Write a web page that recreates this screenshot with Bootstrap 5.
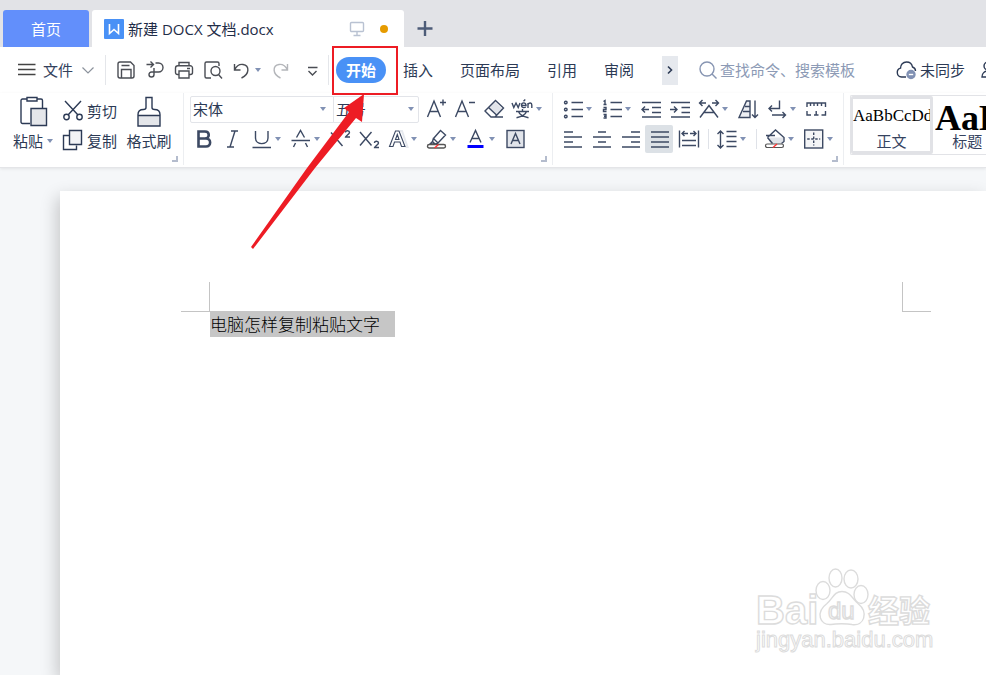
<!DOCTYPE html>
<html lang="zh-CN">
<head>
<meta charset="utf-8">
<meta name="viewport" content="width=device-width, initial-scale=1">
<title>新建 DOCX 文档.docx</title>
<link href="https://cdn.jsdelivr.net/npm/bootstrap@5.3.0/dist/css/bootstrap.min.css" rel="stylesheet">
<style>
body{font-family:"Noto Sans","Noto Sans CJK SC",sans-serif;font-size:15px;line-height:20px;color:#2c3a55;background:#f5f7f9}
.bare,.tool{border:0;padding:0;background:none;color:inherit;font-size:15px;line-height:20px;white-space:nowrap;flex:none;border-radius:0}
.tab-strip{background:#e2e3e7;height:47px;padding-left:3px;gap:3px}
.home-tab{width:86px;height:37px;background:#628ffb;color:#fff;border-radius:3px 3px 0 0}
.doc-tab{width:312px;height:37px;background:#fff;border-radius:3px 3px 0 0;padding:0 16px 0 12px;color:#1f2d48;font-family:"Open Sans","Noto Sans CJK SC",sans-serif}
.doc-tab .dot{width:8px;height:8px;background:#e69b00;margin-left:13px}
.menu-row{height:46px;background:#fff}
.file-menu{margin-left:19px;color:#33415c}
.vline{width:1px;background:#e4e6ea;flex:none}
.ic{width:20px;height:20px;fill:none;stroke:currentColor;stroke-width:1.4;flex:none;overflow:visible;display:block}
.tool{width:29px;height:30px;display:flex;align-items:center;color:#3c4963}
.tool.drop{width:39px;gap:3px}
.caret{width:6px;height:4px;flex:none;background:#8191b4;clip-path:polygon(0 0,100% 0,50% 100%)}
.quick{padding-left:5px;color:#4a4d54}
.quick .tool{color:#4a4d54;padding-left:5px}
.pill{background:#4991f6;color:#fff;width:50px;height:26px;border-radius:13px;font-weight:700;margin-left:7px}
.menu-tabs{gap:27px;padding-left:17px}
.more-box{width:16px;height:29px;background:#e6e9ee;margin-left:28px}
.search-label{gap:2px}
.search-box{width:136px;color:#8c9ab5;outline:0}
.search-box::placeholder{color:#8c9ab5;opacity:1}
.ribbon{background:#fff;height:75px;border-bottom:1px solid #e4e5e8;box-shadow:0 1px 3px rgba(0,0,0,.08);position:relative}
.group{border-right:1px solid #eceef1;margin-bottom:2px;position:relative;flex:none}
.launch{position:absolute;right:5px;bottom:3px;width:6px;height:6px;border:solid #b4bccd;border-width:0 2px 2px 0}
.clip-group{width:184px;padding:3px 0 0 13px}
.big{width:50px;gap:4px}
.brush{width:56px}
.big svg{width:28px;height:31px}
.font-group{width:369px;padding:1px 0 0 6px}
.combo{height:27px;border:1px solid #e2e4e9;padding:0 7px 0 2px;flex:none}
.combo select{appearance:none;border:0;background:none;color:#2c3a55;padding:0;outline:0;min-width:0;flex:1}
.name-combo{width:144px;border-radius:2px 0 0 2px}
.size-combo{width:86px;margin-left:-1px;margin-right:7px;border-radius:0 2px 2px 0;padding-right:4px}
.para-group{width:291px;padding:1px 0 0 10px}
.split{width:9px;height:20px;border-left:1px solid #dfe2e8;margin-top:5px}
.chosen{position:relative}
.chosen::before{content:"";position:absolute;inset:1px 6px 1px -5px;background:#dce1e6;border-radius:2px}
.chosen .ic{position:relative}
.gallery{margin:2px 0 12px 6px;border:1px solid #e2e3e7;border-right:0;border-radius:2px 0 0 2px;overflow:hidden}
.style-card{width:82px;overflow:hidden;flex:none;border:3px solid transparent;border-left-width:2px;padding:0;background:none;color:#36435f}
.style-card.current{border-color:#e1e2e6;border-radius:2px}
.style-card span{display:block}
.sample{font-family:"Liberation Serif",serif;font-size:17px;line-height:32px;height:31px;color:#000;text-align:left;white-space:nowrap}
.sample.title{font-size:36px;font-weight:700;line-height:36px}
.sheet{background:#fff;margin:23px 0 0 60px;box-shadow:-3px 6px 16px rgba(0,0,0,.2);padding:91px 55px 0 121px;position:relative}
.corner{width:29px;height:30px;border:0 solid #c4c4c4;border-bottom-width:1px}
.corner.start{border-right-width:1px}
.corner.end{border-left-width:1px}
.selected-text{display:inline-block;min-width:185px;background:#c6c6c6;color:#000;font-family:"Noto Sans CJK SC",sans-serif;font-weight:300;font-size:17px;line-height:26px;margin-left:29px;margin-top:-1px;vertical-align:top}
.watermark{position:absolute;right:50px;bottom:16px;width:184px;height:92px}
.callout{position:absolute;left:240px;top:40px;width:170px;height:215px;pointer-events:none}
</style>
<script src="https://cdn.jsdelivr.net/npm/bootstrap@5.3.0/dist/js/bootstrap.bundle.min.js"></script>
</head>
<body class="vh-100 d-flex flex-column overflow-hidden position-relative">

<header class="tab-strip d-flex align-items-end flex-shrink-0">
  <button class="bare home-tab">首页</button>
  <div class="doc-tab d-flex align-items-center flex-shrink-0">
    <svg class="ic me-1" viewBox="0 0 20 20"><rect width="20" height="20" rx="1" fill="#4991f6" stroke="none"/><path d="M5.500 5v9.500l4.500-4 4.500 4V5" stroke="#fff" stroke-width="1.600"/></svg>
    <span class="me-auto text-nowrap">新建 DOCX 文档.docx</span>
    <svg class="ic" viewBox="0 0 20 20" style="color:#b9c2d2"><rect x="3.500" y="3.500" width="13" height="9" rx="1"/><path d="M10 13v3.500M6.500 16.500h7"/></svg>
    <span class="dot rounded-circle flex-shrink-0"></span>
  </div>
  <button class="bare ms-2 mb-2" aria-label="新建标签"><svg class="ic" viewBox="0 0 20 20" style="color:#4d5c78"><path d="M10 2v15M2.500 9.500h15" stroke-width="2.400"/></svg></button>
</header>

<nav class="menu-row d-flex align-items-center flex-shrink-0 overflow-hidden">
  <button class="bare file-menu d-flex align-items-center">
    <svg class="ic me-1" viewBox="0 0 20 20"><path d="M-1 4.500h17.500M-1 9.500h17.500M-1 14.500h17.500" stroke="#444"/></svg>文件
    <svg class="ic ms-1" viewBox="0 0 20 20" style="color:#8c929c"><path d="M5.500 7.500l5.500 5.500 5.500-5.500" stroke-width="1.200"/></svg>
  </button>
  <span class="vline ms-2" style="height:30px"></span>
  <div class="quick d-flex">
    <button class="tool" aria-label="保存"><svg class="ic" viewBox="0 0 20 20"><path d="M2 4a2 2 0 0 1 2-2h10.500L18 5.500V16a2 2 0 0 1-2 2H4a2 2 0 0 1-2-2zM5.500 18V9.500h9.500V18M5.500 5.500h8"/></svg></button>
    <button class="tool" aria-label="导出"><svg class="ic" viewBox="0 0 20 20"><path d="M1.500 4.500h6.500M5.500 1.500l3 3-3 3M10.500 3H13.500a4.500 4.500 0 0 1 0 9H6.500a2.500 2.500 0 1 0 2.500 2.500V8"/></svg></button>
    <button class="tool" aria-label="打印"><svg class="ic" viewBox="0 0 20 20"><path d="M5 5.500V2.500h10v3M5 14.500H3.500a2 2 0 0 1-2-2V8a2.300 2.300 0 0 1 2.300-2.300h12.400A2.300 2.300 0 0 1 18.500 8v4.500a2 2 0 0 1-2 2H15M5 11h10v7H5zM13 8.500h3"/></svg></button>
    <button class="tool" aria-label="打印预览"><svg class="ic" viewBox="0 0 20 20"><path d="M8 18H3.500A1.500 1.500 0 0 1 2 16.500v-13A1.500 1.500 0 0 1 3.500 2h11A1.500 1.500 0 0 1 16 3.500V6M15.500 14.500L19 18.500"/><circle cx="12.500" cy="11" r="4.500"/></svg></button>
    <button class="tool drop" aria-label="撤销"><svg class="ic" viewBox="0 0 20 20"><path d="M2.500 4v6h6M2.500 10c2-4 5-6 8.500-5.500 6.500 1 7 9.500-1.500 13.500"/></svg><span class="caret"></span></button>
    <button class="tool" aria-label="恢复" style="color:#b4b6ba"><svg class="ic" viewBox="0 0 20 20"><path d="M16.500 4v6h-6M16.500 10c-2-4-5-6-8.500-5.500-6.500 1-7 9.500 1.500 13.500" stroke="#b4b6ba"/></svg></button>
    <button class="tool ms-1" aria-label="自定义快速访问工具栏"><svg class="ic" viewBox="0 0 20 20"><path d="M4 7.500h9.500M4.500 11l4 4 4-4"/></svg></button>
  </div>
  <span class="vline" style="height:30px"></span>
  <button class="bare pill">开始</button>
  <div class="menu-tabs d-flex">
    <button class="bare">插入</button><button class="bare">页面布局</button><button class="bare">引用</button><button class="bare">审阅</button>
  </div>
  <button class="bare more-box d-flex align-items-center me-3" aria-label="更多选项卡"><svg class="ic" viewBox="0 0 20 20"><path d="M6 6.500l3.500 3.500L6 13.500" stroke-width="1.600"/></svg></button>
  <label class="search-label d-flex align-items-center flex-shrink-0 ps-1"><svg class="ic" viewBox="0 0 20 20" style="color:#8795b2"><circle cx="9" cy="9" r="7"/><path d="M14 14l4.500 4.500"/></svg><input class="bare search-box" type="text" aria-label="搜索" placeholder="查找命令、搜索模板"></label>
  <button class="bare d-flex align-items-center ms-4 ps-3"><svg class="ic me-1" viewBox="0 0 20 20"><path d="M10 17H5.500a4.500 4.500 0 0 1-1-8.800C4.500 4.500 7 2 10.500 2c3.200 0 5.500 2 6 5 1.700.500 3 2 3 4"/><circle cx="15" cy="14.500" r="4" fill="#8191b4" stroke="#8191b4"/><path d="M12.800 14.500h4.400" stroke="#fff"/></svg>未同步</button>
  <button class="bare ms-3" aria-label="协作"><svg class="ic" viewBox="0 0 20 20"><circle cx="7" cy="6" r="4"/><path d="M1 17c0-8 12-8 12 0zM14 3a4 4 0 0 1 0 7M16 11c2 1 3 3 3 6h-3"/></svg></button>
</nav>

<section class="ribbon d-flex flex-shrink-0">
 <div class="d-flex w-100 overflow-hidden">
  <div class="group clip-group d-flex align-items-start">
    <button class="bare big d-flex flex-column align-items-start">
      <svg class="ms-2 ic" viewBox="0 0 28 31"><path d="M9 27.500H1.500A1.500 1.500 0 0 1 0 26V4.500A1.500 1.500 0 0 1 1.500 3H6V1.500h10v3.500H6V3M16 3h4a1.500 1.500 0 0 1 1.500 1.500v8"/><path d="M10 12.500h15.500v17H10z" fill="#e4e6ea"/></svg>
      <span class="d-flex align-items-center gap-1">粘贴<i class="caret"></i></span>
    </button>
    <div class="d-flex flex-column">
      <button class="bare d-flex align-items-center gap-1" style="height:30px"><svg class="ic" viewBox="0 0 20 20"><path d="M2 0L15 14M18 0L5 14"/><circle cx="3.500" cy="16" r="2.700"/><circle cx="16.500" cy="16" r="2.700"/></svg>剪切</button>
      <button class="bare d-flex align-items-center gap-1" style="height:30px"><svg class="ic" viewBox="0 0 20 20"><path d="M6.500 4.500h-6v14h13v-4"/><path d="M6.500-.500h12v14h-12z" fill="#f2f3f6"/></svg>复制</button>
    </div>
    <button class="bare big brush d-flex flex-column align-items-center ms-1">
      <svg class="ic" viewBox="0 0 28 31"><path d="M3 19h22v11H3z" fill="#e4e6ea" stroke="none"/><path d="M11 1.500h6v10c0 1.500 1 2 2.500 2 3.500 0 5.500 1.500 5.500 5v11.500H3V18.500c0-3.500 2-5 5.500-5 1.500 0 2.500-.500 2.500-2zM3 19.500h22"/></svg>
      <span>格式刷</span>
    </button>
    <i class="launch"></i>
  </div>

  <div class="group font-group">
    <div class="d-flex align-items-center" style="height:30px">
      <div class="combo name-combo d-flex align-items-center"><select aria-label="字体"><option>宋体</option></select><i class="caret"></i></div>
      <div class="combo size-combo d-flex align-items-center"><select aria-label="字号"><option>五号</option></select><i class="caret"></i></div>
      <button class="tool" aria-label="增大字号"><svg class="ic" viewBox="0 0 20 20"><path d="M1.500 18L8 2l6.500 16M4 12.500h8M14 3.500h6M17 .500v6"/></svg></button>
      <button class="tool" aria-label="减小字号"><svg class="ic" viewBox="0 0 20 20"><path d="M.500 18L7 2l6.500 16M3 12.500h8M14 3.500h6"/></svg></button>
      <button class="tool" aria-label="清除格式"><svg class="ic" viewBox="0 0 20 20"><path d="M10.500 2.500l8 7.500-5.500 6.500-8.500-7.500z" fill="#e1e4ea" stroke="none"/><path d="M11.500 1.500l8 7.500-8.500 9H7l-6-6zM4.500 8.500l8 7.500M7 18h12"/></svg></button>
      <button class="tool drop" aria-label="拼音指南"><svg class="ic" viewBox="0 0 20 20"><path d="M-1 4l1.800 4.500L3 4l2.200 4.500L7 4M8.500 6.500H13C13 3 8.500 3 8.500 6.500c0 2.500 3 2.500 4.300 1.500M10.500 2.200L12.300.500M15 9V4m0 1.500c1-2 3.800-2 3.800.500v3M3 12.500h13M9.500 10v2.500M5.500 12.500c1 3 4 5 10 6.200M13.500 12.500c-1 3-4 5-10 6.200"/></svg><i class="caret"></i></button>
    </div>
    <div class="d-flex ps-1">
      <button class="tool" aria-label="加粗"><svg class="ic" viewBox="0 0 20 20"><path d="M4.500 2.500h6.500c5 0 5 7 0 7H4.500h7.500c5.500 0 5.500 8 0 8H4.500z" stroke-width="2.600"/></svg></button>
      <button class="tool" aria-label="倾斜"><svg class="ic" viewBox="0 0 20 20"><path d="M8 2h7M4 18h7M12 2L7 18"/></svg></button>
      <button class="tool drop" aria-label="下划线"><svg class="ic" viewBox="0 0 20 20"><path d="M3.500 2v7c0 7.500 12.500 7.500 12.500 0V2M.500 18.500h18.500"/></svg><i class="caret"></i></button>
      <button class="tool drop" aria-label="删除线"><svg class="ic" viewBox="0 0 20 20"><path d="M.500 11.500h18.500M5.500 8.500L9.500 1.500l4 7M2.500 18l2-4M16.500 18l-2-4"/></svg><i class="caret"></i></button>
      <button class="tool" aria-label="上标"><svg class="ic" viewBox="0 0 20 20"><path d="M1 3.500L12.500 17M12.500 3.500L1 17M15.500 3.500c0-2.500 4-2 4 0 0 1.500-4 3.500-4 4.500H20"/></svg></button>
      <button class="tool" aria-label="下标"><svg class="ic" viewBox="0 0 20 20"><path d="M1 3L12.500 16.500M12.500 3L1 16.500M15.500 14c0-2.500 4-2 4 0 0 1.500-4 3.500-4 4.500H20"/></svg></button>
      <button class="tool drop" aria-label="文字效果"><svg class="ic" viewBox="0 0 20 20"><path d="M12 2h2l5.500 16h-2" stroke="#e6e9ee" stroke-width="2"/><path d="M1.500 17.500L7.500 2H11l6 15.500h-3.500L12 13H6.500L5 17.500zM7.500 10.500h3.500L9.300 5.500z" stroke-width="1.100"/></svg><i class="caret"></i></button>
      <button class="tool drop" aria-label="突出显示"><svg class="ic" viewBox="0 0 20 20"><path d="M13.500 1.500l5 4.500-7.500 8-4.500-4.500zM6.500 9l-1 3.500 2.500 2.500 3-.500M5.500 12.500L3 15h4.500"/><rect x=".500" y="15.500" width="18" height="3.500" rx="1.700" fill="#fff" stroke="#555"/><path d="M7.500 19l4-3.500" stroke="#f33"/></svg><i class="caret"></i></button>
      <button class="tool drop" aria-label="字体颜色"><svg class="ic" viewBox="0 0 20 20"><path d="M4 13.500L9.500 1.500 15 13.500M6 9.500h7"/><path d="M1.500 17.500h16" stroke="#00f" stroke-width="3"/></svg><i class="caret"></i></button>
      <button class="tool" aria-label="字符底纹"><svg class="ic" viewBox="0 0 20 20"><rect x="2" y="1.500" width="17" height="17" fill="#e1e4ea"/><path d="M6 15L10.500 4.500 15 15M7.500 11.500h6"/></svg></button>
    </div>
    <i class="launch"></i>
  </div>

  <div class="group para-group">
    <div class="d-flex">
      <button class="tool drop" aria-label="项目符号"><svg class="ic" viewBox="0 0 20 20"><path d="M8.500 3.500H20M8.500 10.500H20M8.500 17.500H20"/><circle cx="2.800" cy="3.500" r="1.300"/><circle cx="2.800" cy="10.500" r="1.300"/><circle cx="2.800" cy="17.500" r="1.300"/></svg><i class="caret"></i></button>
      <button class="tool drop" aria-label="编号"><svg class="ic" viewBox="0 0 20 20"><path d="M8.500 3.500H20M8.500 10.500H20M8.500 17.500H20M1.500 2.500L3 1.500v4M1.500 5.500h3M1.500 8.500h2.500v2h-2.500v2h3M1.500 15.500h2.500v3.500h-2.500M2 17.300h2"/></svg><i class="caret"></i></button>
      <button class="tool" aria-label="减少缩进"><svg class="ic" viewBox="0 0 20 20"><path d="M1 3.500h19M11 8.500h9M11 13.500h9M1 18h19M1 10.500h7M4 7.500l-3 3 3 3"/></svg></button>
      <button class="tool" aria-label="增加缩进"><svg class="ic" viewBox="0 0 20 20"><path d="M1 3.500h19M11.500 8.500H20M11.500 13.500H20M1 18h19M0 10.500h7M4 7.500l3 3-3 3"/></svg></button>
      <button class="tool drop" aria-label="中文版式"><svg class="ic" viewBox="0 0 20 20"><path d="M1 18.500L10 6.500l9 12M5 13.500h10M7 4H.500M3.500 1l-3 3 3 3M13 4h6.500M16.500 1l3 3-3 3"/></svg><i class="caret"></i></button>
      <button class="tool" aria-label="排序"><svg class="ic" viewBox="0 0 20 20"><path d="M1 18.500L8.500 2H12v16.500zM7 7.500h5M5 12.500h7" fill="#edeff3"/><path d="M17 1.500v17M14 15.500l3 3 3-3"/></svg></button>
      <button class="tool drop" aria-label="换行标记"><svg class="ic" viewBox="0 0 20 20"><path d="M12.500 1.500v8H2M5 6.500l-3 3 3 3M5 16h13M15.500 13l3 3-3 3"/></svg><i class="caret"></i></button>
      <button class="tool" aria-label="标尺"><svg class="ic" viewBox="0 0 20 20"><path d="M1 8V4h18.500v4M4.500 4v3M8 4v3M11.500 4v3M15.500 4v3M1 12v4h4M8 16h4.500M10.200 12v4M15.500 16h4v-4"/></svg></button>
    </div>
    <div class="d-flex">
      <button class="tool" aria-label="左对齐"><svg class="ic" viewBox="0 0 20 20"><path d="M1 3h9M1 8h18M1 13h9M1 18h18"/></svg></button>
      <button class="tool" aria-label="居中"><svg class="ic" viewBox="0 0 20 20"><path d="M6 3h8M1 8h18M6 13h8M1 18h18"/></svg></button>
      <button class="tool" aria-label="右对齐"><svg class="ic" viewBox="0 0 20 20"><path d="M10 3h9M1 8h18M10 13h9M1 18h18"/></svg></button>
      <button class="tool chosen" aria-label="两端对齐"><svg class="ic" viewBox="0 0 20 20"><path d="M1 3h18M1 8h18M1 13h18M1 18h18"/></svg></button>
      <button class="tool" aria-label="分散对齐"><svg class="ic" viewBox="0 0 20 20"><path d="M.500 1.500v17M19.500 1.500v17M3 11.500h14M3 16.500h14M9 4.500H3M5.500 2L3 4.500 5.500 7M11 4.500h6M14.500 2L17 4.500 14.500 7"/></svg></button>
      <span class="split"></span>
      <button class="tool drop" aria-label="行距"><svg class="ic" viewBox="0 0 20 20"><path d="M3.500 2v17M.500 5l3-3 3 3M.500 16l3 3 3-3M9.500 2.500h10M9.500 7.500h10M9.500 12.500h10M9.500 17.500h10"/></svg><i class="caret"></i></button>
      <span class="split"></span>
      <button class="tool drop" aria-label="底纹颜色"><svg class="ic" viewBox="0 0 20 20"><path d="M4 8.500h14.500v3.500l-2.500 3H6l-2.500-4z" fill="#e1e4ea" stroke="none"/><path d="M2.500 8.500L10.500 1l8.500 7.500v4l-2.500 2M2.500 8.500l5 6M1 6.500h9"/><rect x=".500" y="15" width="18" height="3.500" rx="1.700" fill="#fff" stroke="#555" stroke-width="1.200"/><path d="M8 18.500l4-3.500" stroke="#f33"/></svg><i class="caret"></i></button>
      <button class="tool drop" aria-label="边框"><svg class="ic" viewBox="0 0 20 20"><rect x=".700" y="1" width="18" height="18" fill="#f4f5f7"/><path d="M9.700 3.500v13M3.200 10h13" stroke-dasharray="2.500 1.500"/></svg><i class="caret"></i></button>
    </div>
    <i class="launch"></i>
  </div>

  <div class="gallery d-flex flex-grow-1">
    <button class="style-card current"><span class="sample">AaBbCcDd</span><span>正文</span></button>
    <button class="style-card"><span class="sample title">AaBb</span><span>标题 1</span></button>
  </div>
 </div>
</section>

<main class="sheet flex-grow-1">
  <div class="d-flex justify-content-between"><span class="corner start"></span><span class="corner end"></span></div>
  <p class="m-0"><span class="selected-text">电脑怎样复制粘贴文字</span></p>
  <svg class="watermark" viewBox="0 0 184 92" fill="#fff" stroke="#dcdcdc" stroke-width="1.400" font-family="Liberation Sans, Noto Sans CJK SC, sans-serif">
    <text x="4" y="57" font-size="40" font-weight="700">Bai</text>
    <ellipse cx="71" cy="23.500" rx="7" ry="9"/><ellipse cx="83.500" cy="11" rx="6.500" ry="9"/><ellipse cx="99" cy="12" rx="7" ry="9"/><ellipse cx="109" cy="27.500" rx="7" ry="9"/>
    <path d="M90 24.500c-8 0-9 7-15 12-12 9-7 22 4 21 5-1 16-1 21 0 12 2 17-12 6-21-6-5-8-12-16-12z"/>
    <text x="76" y="52" font-size="24">du</text>
    <text x="116" y="55" font-size="31" font-weight="700">经验</text>
    <text x="4" y="80" font-size="22" stroke-width="1">jingyan.baidu.com</text>
  </svg>
</main>

<svg class="callout" viewBox="0 0 170 215" aria-hidden="true"><rect x="93" y="7" width="64" height="47" fill="none" stroke="#ed1c24" stroke-width="2"/><path d="M124 54L104 68l5 4L67 128 11 207l2 2 62-81 41-50 6 4z" fill="#ed1c24"/></svg>
</body>
</html>
